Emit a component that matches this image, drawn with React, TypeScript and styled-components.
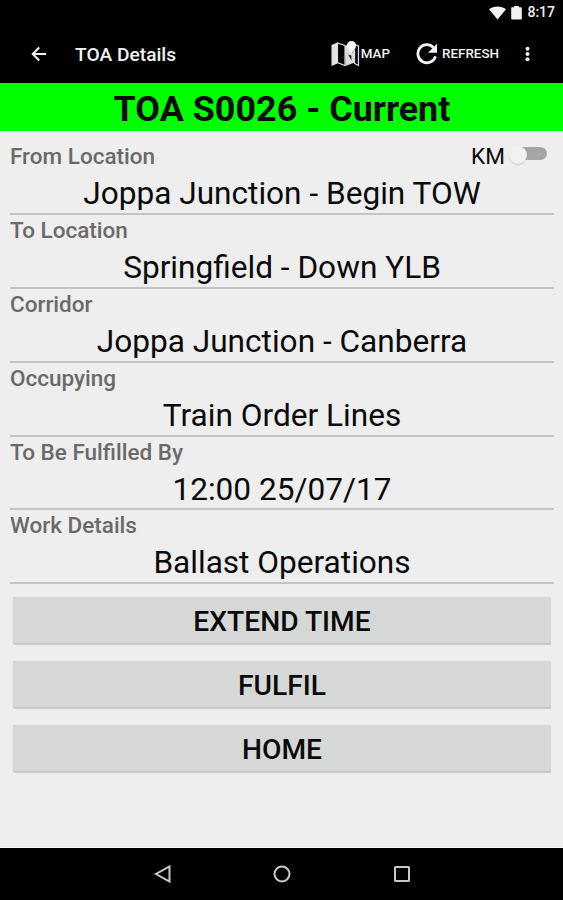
import React from "react";
import styled, { createGlobalStyle } from "styled-components";

const GlobalStyle = createGlobalStyle`
  *, *::before, *::after { box-sizing: border-box; }
  html, body { margin: 0; padding: 0; background: #eeeeee; }
  body { font-family: Roboto, "Liberation Sans", sans-serif; }
`;

const Screen = styled.div`
  display: flex;
  flex-direction: column;
  width: 563px;
  height: 900px;
  overflow: hidden;
  background: #eeeeee;
  color: #0a0a0a;
`;

const StatusBar = styled.div`
  display: flex;
  flex: none;
  align-items: center;
  justify-content: flex-end;
  gap: 5px;
  height: 25px;
  padding-right: 8px;
  background: #000;
  color: #f2f2f2;
`;

const Clock = styled.span`
  font-size: 14px;
  font-weight: 500;
  line-height: 25px;
`;

const AppBar = styled.header`
  display: flex;
  flex: none;
  align-items: center;
  height: 58px;
  padding: 0 33px 0 31px;
  background: #000;
  color: #f2f2f2;
`;

const IconButton = styled.button`
  display: flex;
  padding: 0;
  border: 0;
  background: none;
  color: inherit;
`;

const AppTitle = styled.h1`
  flex: 1;
  margin: 1px 0 0 28px;
  font-size: 19.2px;
  font-weight: 500;
  line-height: 24px;
`;

const Action = styled.button<{ $gap: number; $after: number }>`
  display: flex;
  align-items: center;
  gap: ${(p) => p.$gap}px;
  margin: 0 ${(p) => p.$after}px 0 0;
  padding: 0;
  border: 0;
  background: none;
  color: inherit;
  font: 500 13.4px/20px Roboto, sans-serif;
`;

const Banner = styled.h2`
  flex: none;
  height: 48px;
  margin: 0;
  padding-left: 1px;
  background: #00ff00;
  font-size: 35.9px;
  font-weight: 700;
  line-height: 53px;
  text-align: center;
`;

const Details = styled.main`
  display: flex;
  flex: 1;
  flex-direction: column;
  padding: 10px 9px 0 10px;
  border-bottom: 1px solid #fafafa;
`;

const Field = styled.section`
  flex: none;
  height: 73.9px;
  border-bottom: 2px solid #c4c4c4;
`;

const FieldHead = styled.div`
  display: flex;
  justify-content: space-between;
  height: 33px;
`;

const Label = styled.span`
  color: #6a6a6a;
  font-size: 22.5px;
  font-weight: 500;
  line-height: 30px;
`;

const Value = styled.div`
  font-size: 31.6px;
  line-height: 40px;
  text-align: center;
  white-space: nowrap;
`;

const UnitToggle = styled.div`
  display: flex;
  align-items: flex-start;
  gap: 4px;
  padding-right: 7px;
  font-size: 22.6px;
  line-height: 32px;
`;

const Switch = styled.button`
  display: flex;
  align-items: flex-start;
  width: 38px;
  height: 13px;
  margin-top: 6px;
  padding: 0;
  border: 0;
  background: linear-gradient(#a5a5a5, #a5a5a5) right center / 29px 13px no-repeat;
  border-radius: 6.5px;
`;

const Thumb = styled.span`
  flex: none;
  width: 18px;
  height: 18px;
  margin-top: -1px;
  border-radius: 50%;
  background: #f1f1f1;
  box-shadow: 0 1px 1px rgba(0, 0, 0, 0.14);
`;

const Actions = styled.div`
  display: flex;
  flex-direction: column;
  gap: 16px;
  margin: 13px 3px 0 3px;
`;

const ActionButton = styled.button`
  height: 48px;
  padding: 2px 0 0;
  border: 0;
  border-radius: 2px;
  background: #d6d8d7;
  box-shadow: inset 0 -2px 0 #c8caca, 0 0 1px rgba(0, 0, 0, 0.12);
  color: #0a0a0a;
  font: 500 28.2px/46px Roboto, sans-serif;
`;

const NavBar = styled.nav`
  display: flex;
  flex: none;
  align-items: center;
  justify-content: center;
  gap: 100px;
  height: 52px;
  background: #000;
  color: #c8c8c8;
`;

const fields = [
  { label: "From Location", value: "Joppa Junction - Begin TOW", unit: true },
  { label: "To Location", value: "Springfield - Down YLB" },
  { label: "Corridor", value: "Joppa Junction - Canberra" },
  { label: "Occupying", value: "Train Order Lines" },
  { label: "To Be Fulfilled By", value: "12:00 25/07/17" },
  { label: "Work Details", value: "Ballast Operations" },
];

const WifiIcon = () => (
  <svg width="17" height="14" viewBox="0 0 17 14" fill="currentColor">
    <path d="M0 3.200C4.800-.5 12.200-.5 17 3.200L8.500 13.500z" />
  </svg>
);

const BatteryIcon = () => (
  <svg width="11" height="14" viewBox="0 0 11 14" fill="currentColor">
    <path d="M3 0h5v1.200H10a.8.8 0 0 1 .8.8v10.700a.8.8 0 0 1-.8.8H1a.8.8 0 0 1-.8-.8V2A.8.8 0 0 1 1 1.200h2z" />
  </svg>
);

const BackIcon = () => (
  <svg width="16" height="16" viewBox="0 0 16 16" fill="none" stroke="currentColor" strokeWidth="2">
    <path d="M15 8H2M8.200 1.500 1.700 8l6.500 6.500" />
  </svg>
);

const MapIcon = () => (
  <svg width="29" height="28" viewBox="0 0 29 28">
    <path d="M.5 5 6.500 2.500V23.500L.5 26z" fill="#e4e4e4" />
    <path d="m6.500 3 7.500 2.500v20l-7.500-3z" fill="#000" stroke="#ddd" strokeWidth="1.200" />
    <path d="M14 6 17 4.500 20.500 14l3-4v12.500L14.500 26z" fill="#dcdcdc" />
    <path d="m17 14.500 3.500 6v-5z" fill="#333" />
    <path d="M25 5l2.500 1v19.500l-4-2V10" fill="#111" stroke="#ddd" strokeWidth="1.200" />
    <path d="M20.500 15c-.6-3.500-4.600-5.800-4.600-9.500a4.600 4.600 0 0 1 9.200 0c0 3.700-4 6-4.600 9.500z" fill="#f5f5f5" />
  </svg>
);

const RefreshIcon = () => (
  <svg width="22" height="22" viewBox="0 0 22 22">
    <path d="M17.600 4.700A9 9 0 1 0 19.500 13.300" fill="none" stroke="#f2f2f2" strokeWidth="2.800" />
    <path d="M21 .8V9.800H12z" fill="#f2f2f2" />
  </svg>
);

const MoreIcon = () => (
  <svg width="5" height="16" viewBox="0 0 5 16" fill="currentColor">
    <circle cx="2.500" cy="2.800" r="2" />
    <circle cx="2.500" cy="8" r="2" />
    <circle cx="2.500" cy="13.200" r="2" />
  </svg>
);

const NavIcon = ({ children }: { children: React.ReactNode }) => (
  <svg width="20" height="20" viewBox="0 0 20 20" fill="none" stroke="currentColor" strokeWidth="2">
    {children}
  </svg>
);

export default function App() {
  return (
    <Screen>
      <GlobalStyle />
      <StatusBar>
        <WifiIcon />
        <BatteryIcon />
        <Clock>8:17</Clock>
      </StatusBar>
      <AppBar>
        <IconButton aria-label="Back"><BackIcon /></IconButton>
        <AppTitle>TOA Details</AppTitle>
        <Action $gap={1} $after={26}><MapIcon />MAP</Action>
        <Action $gap={4} $after={26}><RefreshIcon />REFRESH</Action>
        <IconButton aria-label="More options"><MoreIcon /></IconButton>
      </AppBar>
      <Banner>TOA S0026 - Current</Banner>
      <Details>
        {fields.map((f) => (
          <Field key={f.label}>
            <FieldHead>
              <Label>{f.label}</Label>
              {f.unit && (
                <UnitToggle>
                  KM
                  <Switch role="switch" aria-checked={false} aria-label="Kilometres"><Thumb /></Switch>
                </UnitToggle>
              )}
            </FieldHead>
            <Value>{f.value}</Value>
          </Field>
        ))}
        <Actions>
          <ActionButton>EXTEND TIME</ActionButton>
          <ActionButton>FULFIL</ActionButton>
          <ActionButton>HOME</ActionButton>
        </Actions>
      </Details>
      <NavBar>
        <IconButton aria-label="Back"><NavIcon><path d="M17.500 2.500v15L4 10z" /></NavIcon></IconButton>
        <IconButton aria-label="Home"><NavIcon><circle cx="10" cy="10" r="7.500" /></NavIcon></IconButton>
        <IconButton aria-label="Recent apps"><NavIcon><rect x="3" y="3" width="14" height="14" rx="0.500" /></NavIcon></IconButton>
      </NavBar>
    </Screen>
  );
}
